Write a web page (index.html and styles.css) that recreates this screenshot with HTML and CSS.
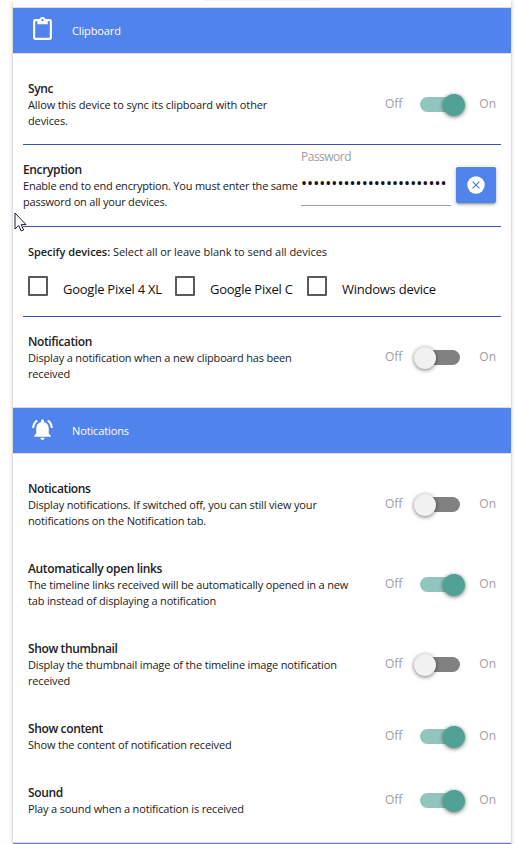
FILE: index.html
```html
<!DOCTYPE html>
<html lang="en">
<head>
  <meta charset="UTF-8">
  <meta name="viewport" content="width=device-width, initial-scale=1">
  <title>Settings</title>
  <link rel="stylesheet" href="styles.css">
</head>
<body>

<div class="settings">
  <div class="settings-top"><div class="top-handle"></div></div>

  <div class="section-header">
    <svg class="section-icon" viewBox="0 0 24 24"><path d="M19 2h-4.18C14.4.84 13.3 0 12 0S9.6.84 9.18 2H5c-1.1 0-2 .9-2 2v16c0 1.1.9 2 2 2h14c1.1 0 2-.9 2-2V4c0-1.1-.9-2-2-2zm-7 0c.55 0 1 .45 1 1s-.45 1-1 1-1-.45-1-1 .45-1 1-1zm7 18H5V4h2v3h10V4h2v16z"/></svg>
    <span>Clipboard</span>
  </div>
  <div class="section-body clipboard">
    <div class="row sync">
      <div class="row-text"><b>Sync</b><p>Allow this device to sync its clipboard with other<br>devices.</p></div>
      <label class="switch">Off<input type="checkbox" checked><span class="lever"></span>On</label>
    </div>

    <div class="row encryption">
      <div class="row-text"><b>Encryption</b><p>Enable end to end encryption. You must enter the same<br>password on all your devices.</p></div>
      <div class="input-field">
        <label for="password">Password</label>
        <input type="password" id="password" value="abcdefghijklmnopqrstuvwx">
      </div>
      <button class="btn" type="button">
        <svg viewBox="0 0 20 20"><circle cx="10" cy="10" r="8.7" fill="#fff"/><path d="M6.6 6.6l6.8 6.8M13.4 6.6l-6.8 6.8" stroke="#5183ec" stroke-width="1.3"/></svg>
      </button>
    </div>

    <div class="devices">
      <p><b>Specify devices:</b> Select all or leave blank to send all devices</p>
      <div class="device-list">
        <label class="device pixel4"><input type="checkbox"><span class="box"></span>Google Pixel 4 XL</label>
        <label class="device"><input type="checkbox"><span class="box"></span>Google Pixel C</label>
        <label class="device"><input type="checkbox"><span class="box"></span>Windows device</label>
      </div>
    </div>

    <div class="row notify">
      <div class="row-text"><b>Notification</b><p>Display a notification when a new clipboard has been<br>received</p></div>
      <label class="switch">Off<input type="checkbox"><span class="lever"></span>On</label>
    </div>
  </div>

  <div class="section-header">
    <svg class="section-icon" viewBox="0 0 24 24"><path d="M7.58 4.08L6.15 2.65C3.75 4.48 2.17 7.3 2.03 10.5h2c.15-2.65 1.51-4.97 3.55-6.42zm12.39 6.42h2c-.15-3.2-1.73-6.02-4.12-7.85l-1.42 1.43c2.02 1.45 3.39 3.77 3.54 6.42zM18 11c0-3.07-1.64-5.64-4.5-6.32V4c0-.83-.67-1.5-1.5-1.5s-1.5.67-1.5 1.5v.68C7.63 5.36 6 7.92 6 11v5l-2 2v1h16v-1l-2-2v-5zm-6 11c.14 0 .27-.01.4-.04.65-.14 1.18-.58 1.44-1.18.1-.24.15-.5.15-.78h-4c.01 1.1.9 2 2.01 2z"/></svg>
    <span>Notications</span>
  </div>
  <div class="section-body notifications">
    <div class="row">
      <div class="row-text"><b>Notications</b><p>Display notifications. If switched off, you can still view your<br>notifications on the Notification tab.</p></div>
      <label class="switch">Off<input type="checkbox"><span class="lever"></span>On</label>
    </div>
    <div class="row">
      <div class="row-text"><b>Automatically open links</b><p>The timeline links received will be automatically opened in a new<br>tab instead of displaying a notification</p></div>
      <label class="switch">Off<input type="checkbox" checked><span class="lever"></span>On</label>
    </div>
    <div class="row">
      <div class="row-text"><b>Show thumbnail</b><p>Display the thumbnail image of the timeline image notification<br>received</p></div>
      <label class="switch">Off<input type="checkbox"><span class="lever"></span>On</label>
    </div>
    <div class="row">
      <div class="row-text"><b>Show content</b><p>Show the content of notification received</p></div>
      <label class="switch">Off<input type="checkbox" checked><span class="lever"></span>On</label>
    </div>
    <div class="row">
      <div class="row-text"><b>Sound</b><p>Play a sound when a notification is received</p></div>
      <label class="switch">Off<input type="checkbox" checked><span class="lever"></span>On</label>
    </div>
  </div>
  <div class="section-edge"></div>
</div>

<svg class="cursor" viewBox="0 0 13 20"><path d="M1 1v16l3.7-3.5L7.2 19l2.4-1-2.4-5.4H12z" fill="#fff" stroke="#1c1c30" stroke-width="1"/></svg>

</body>
</html>
```
FILE: styles.css
```css
* {
  box-sizing: border-box;
}

body {
  margin: 0;
  height: 844px;
  overflow: hidden;
  position: relative;
  background: #fff;
  font-family: "Open Sans", "Noto Sans", sans-serif;
  font-size: 11px;
  line-height: 16px;
  color: #212121;
}

p {
  margin: 0;
  letter-spacing: -0.16px;
}

b {
  font-weight: 600;
}

.settings {
  width: 498px;
  height: 844px;
  margin-left: 13px;
  background: #fff;
  box-shadow: 0 2px 2px 0 rgba(0,0,0,0.14), 0 3px 1px -2px rgba(0,0,0,0.12), 0 1px 5px 0 rgba(0,0,0,0.2);
}

.settings-top {
  height: 7px;
}

.top-handle {
  width: 116px;
  height: 1px;
  margin: 0 auto;
  background: #f3f3f3;
}

.section-header {
  display: flex;
  align-items: center;
  height: 47px;
  padding-left: 17px;
  border-top: 1px solid #ddd;
  border-bottom: 1px solid #ddd;
  background: #5183ec;
  color: #fff;
  letter-spacing: -0.12px;
}

/* top of the next header, cut off by the window */
.section-edge {
  height: 2px;
  border-top: 1px solid #ddd;
  background: #5183ec;
}

.section-icon {
  width: 25px;
  height: 25px;
  margin: -3px 17px 0 0;
  fill: #fff;
}

.section-body.clipboard {
  height: 353px;
  padding: 0 10px;
}

.section-body.notifications {
  height: 388px;
  padding: 27px 10px 0;
}

.row {
  display: flex;
  justify-content: space-between;
  align-items: center;
  padding: 0 5px;
}

.notifications .row {
  margin-bottom: 32px;
}

.row-text {
  white-space: nowrap;
}

.row-text b {
  display: block;
  font-size: 12px;
  letter-spacing: -0.37px;
}

.sync {
  height: 91px;
  padding-top: 12px;
  border-bottom: 1px solid #3f51b5;
}

.sync p {
  letter-spacing: -0.12px;
}

.encryption {
  height: 82px;
  padding: 0 5px 0 0;
  border-bottom: 1px solid #3f51b5;
}

.encryption p {
  letter-spacing: -0.21px;
}

.devices {
  height: 90px;
  padding: 17px 5px 0;
  border-bottom: 1px solid #3f51b5;
}

.devices p {
  letter-spacing: -0.04px;
}

.notify {
  padding-top: 17px;
}

/* switches */
.switch {
  display: flex;
  align-items: center;
  margin-top: -2px;
  font-size: 12px;
  color: #9e9e9e;
}

.switch input,
.device input {
  display: none;
}

.lever {
  position: relative;
  width: 40px;
  height: 15px;
  margin: 1px 19px 0 18px;
  border-radius: 8px;
  background: #818181;
}

.lever::after {
  content: "";
  position: absolute;
  top: -3px;
  left: -6px;
  width: 22px;
  height: 22px;
  border-radius: 50%;
  background: #f1f1f1;
  box-shadow: 0 1px 4px rgba(0,0,0,0.55);
}

input:checked + .lever {
  background: #92c5be;
}

input:checked + .lever::after {
  left: 23px;
  background: #52a197;
}

/* password */
.input-field {
  flex: none;
  width: 150px;
  height: 58px;
  margin: -17px 5px 0 auto;
  border-bottom: 1px solid #9e9e9e;
}

.input-field label {
  display: block;
  padding-top: 1px;
  color: #9e9e9e;
  font-size: 12px;
  letter-spacing: -0.5px;
}

.input-field input {
  display: block;
  width: 100%;
  height: 35px;
  padding: 0;
  border: none;
  outline: none;
  background: none;
  font-family: "Open Sans", sans-serif;
  font-size: 16px;
  letter-spacing: 0.05px;
  color: #111;
}

.btn {
  display: flex;
  flex: none;
  align-items: center;
  justify-content: center;
  width: 40px;
  height: 36px;
  margin-top: -1px;
  padding: 0;
  border: none;
  border-radius: 2px;
  background: #5183ec;
  box-shadow: 0 2px 2px 0 rgba(0,0,0,0.14), 0 3px 1px -2px rgba(0,0,0,0.12), 0 1px 5px 0 rgba(0,0,0,0.2);
}

.btn svg {
  width: 20px;
  height: 20px;
}

/* devices */
.device-list {
  display: flex;
  margin-top: 16px;
}

.device {
  display: flex;
  width: 132px;
  font-size: 13px;
  letter-spacing: -0.25px;
  line-height: 26px;
  color: #111;
  white-space: nowrap;
}

.device.pixel4 {
  width: 147px;
}

.box {
  width: 20px;
  height: 20px;
  margin-right: 15px;
  border: 2px solid #5a5a5a;
  border-radius: 1px;
}

.cursor {
  position: absolute;
  left: 14px;
  top: 212px;
  width: 13px;
  height: 20px;
}
```
